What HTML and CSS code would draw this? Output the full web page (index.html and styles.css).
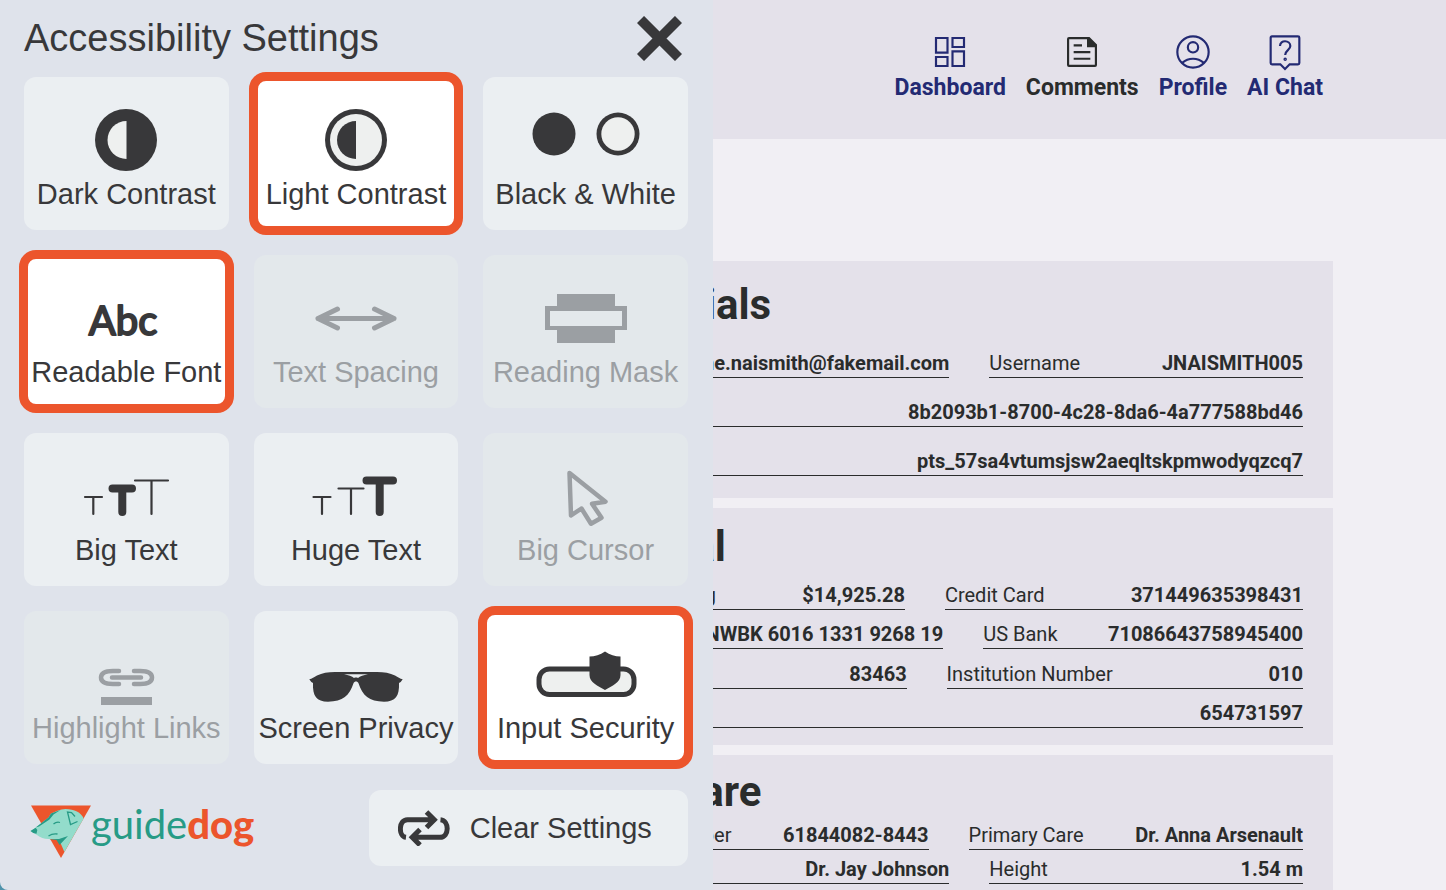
FILE: index.html
```
<!DOCTYPE html>
<html lang="en">
<head>
    <meta charset="UTF-8">
    <meta name="viewport" content="width=device-width, initial-scale=1.0">
    <title>Profile</title>
    <link rel="stylesheet" href="styles.css">
</head>
<body>
    <div class="page">
        <header class="site-header">
            <nav class="nav">
                <a class="nav-link" href="#dashboard">
                    <svg class="line" viewBox="0 0 24 24"><path d="M3.600 3.600h6.900v8.800H3.600zM13.500 3.600h6.900v5.400h-6.900zM3.600 15h6.900v5.400H3.600zM13.500 11.600h6.900v8.800h-6.900z"/></svg>
                    Dashboard
                </a>
                <a class="nav-link current" href="#comments">
                    <svg viewBox="0 0 24 24"><path fill-rule="evenodd" d="M4.200 3H16.500l4.500 4.500v12.300a1.200 1.200 0 0 1-1.200 1.200H4.200A1.200 1.200 0 0 1 3 19.800V4.200A1.200 1.200 0 0 1 4.200 3zM4.300 4.300v15.400h15.400V9.200H15V4.300z"/><path d="M7 7.400h5v1.300H7zM7 11.400h10v1.300H7zM7 15.400h10v1.300H7z"/></svg>
                    Comments
                </a>
                <a class="nav-link" href="#profile">
                    <svg class="line" viewBox="0 0 24 24"><circle cx="12" cy="12" r="9.400"/><circle cx="12" cy="9.200" r="3.100"/><path d="M5.500 18.500c3.800-3.300 9.200-3.300 13 0"/></svg>
                    Profile
                </a>
                <a class="nav-link" href="#chat">
                    <svg class="line" viewBox="0 0 24 24"><path d="M4.200 2.600h15.600q.8 0 .8.800v15.200q0 .8-.8.800h-5L12 22.200l-2.800-2.800h-5q-.8 0-.8-.8V3.400q0-.8.800-.8z"/><path d="M9 8.400c0-4 6.200-3.600 6.200 0 0 2.400-3.100 2.600-3.100 5.400"/><circle cx="12.100" cy="16.400" r=".4"/></svg>
                    AI Chat
                </a>
            </nav>
        </header>

        <main class="content">
            <section class="card">
                <h2>Credentials</h2>
                <div class="row">
                    <div class="field"><span>Email</span><b>jane.naismith@fakemail.com</b></div>
                    <div class="field"><span>Username</span><b>JNAISMITH005</b></div>
                </div>
                <div class="row">
                    <div class="field"><span>User ID</span><b>8b2093b1-8700-4c28-8da6-4a777588bd46</b></div>
                </div>
                <div class="row">
                    <div class="field"><span>Token</span><b>pts_57sa4vtumsjsw2aeqltskpmwodyqzcq7</b></div>
                </div>
            </section>

            <section class="card">
                <h2>Financial</h2>
                <div class="row">
                    <div class="field"><span>Balance Chequing</span><b>$14,925.28</b></div>
                    <div class="field"><span>Credit Card</span><b>371449635398431</b></div>
                </div>
                <div class="row">
                    <div class="field"><span>IBAN</span><b>GB31 NWBK 6016 1331 9268 19</b></div>
                    <div class="field"><span>US Bank</span><b>71086643758945400</b></div>
                </div>
                <div class="row">
                    <div class="field"><span>Transit Number</span><b>83463</b></div>
                    <div class="field"><span>Institution Number</span><b>010</b></div>
                </div>
                <div class="row">
                    <div class="field"><span>Account</span><b>654731597</b></div>
                </div>
            </section>

            <section class="card card-dense">
                <h2>Healthcare</h2>
                <div class="row">
                    <div class="field"><span>Patient File Number</span><b>61844082-8443</b></div>
                    <div class="field"><span>Primary Care</span><b>Dr. Anna Arsenault</b></div>
                </div>
                <div class="row">
                    <div class="field"><span>Dental</span><b>Dr. Jay Johnson</b></div>
                    <div class="field"><span>Height</span><b>1.54 m</b></div>
                </div>
            </section>
        </main>
    </div>

    <aside class="panel" aria-label="Accessibility Settings">
        <div class="panel-head">
            <h1>Accessibility Settings</h1>
            <button class="close" type="button" aria-label="Close">
                <svg viewBox="0 0 45 45"><path d="M3.500 3.500l38 38M41.500 3.500l-38 38"/></svg>
            </button>
        </div>

        <div class="tiles">
            <button class="tile" type="button">
                <svg viewBox="0 0 204 100"><circle class="ink" cx="102" cy="63" r="31"/><path class="pale" d="M102.500 44a19 19 0 0 0 0 38z"/></svg>
                Dark Contrast
            </button>
            <button class="tile active" type="button" aria-pressed="true">
                <svg viewBox="0 0 204 100"><circle class="ink" cx="102" cy="63" r="31"/><circle class="pale" cx="102" cy="63" r="26"/><path class="ink" d="M102 44a19 19 0 0 0 0 38z"/></svg>
                Light Contrast
            </button>
            <button class="tile" type="button">
                <svg viewBox="0 0 204 100"><circle class="ink" cx="70" cy="57" r="21.500"/><circle class="ink" cx="134" cy="57" r="21.500"/><circle class="pale" cx="134" cy="57" r="16.700"/></svg>
                Black &amp; White
            </button>

            <button class="tile active" type="button" aria-pressed="true">
                <svg viewBox="0 0 204 100"><text class="abc" x="99" y="80" text-anchor="middle">Abc</text></svg>
                Readable Font
            </button>
            <button class="tile" type="button" disabled>
                <svg viewBox="0 0 204 100"><path class="stroke" stroke-width="5" d="M64 63.500h76M83.500 54L64 63.500 83.500 73M120.500 54l19.500 9.500-19.500 9.500"/></svg>
                Text Spacing
            </button>
            <button class="tile" type="button" disabled>
                <svg viewBox="0 0 204 100"><path class="ink" fill-rule="evenodd" d="M73 39h58v12h12v24h-12v13H73V75H61V51h12zM66 56v15h72V56z"/></svg>
                Reading Mask
            </button>

            <button class="tile" type="button">
                <svg viewBox="0 0 204 100">
                    <path class="stroke" stroke-width="2.200" d="M61 64h17M69.300 64v17M111 47.500h33M127.500 47.500V81"/>
                    <path class="stroke" stroke-width="8" d="M88.500 55.500h19.500M98.300 55.500V79"/>
                </svg>
                Big Text
            </button>
            <button class="tile" type="button">
                <svg viewBox="0 0 204 100">
                    <path class="stroke" stroke-width="2.200" d="M59.500 64h17M68 64v17M84.500 55.500h25M97 55.500V81"/>
                    <path class="stroke" stroke-width="8" d="M112.500 47.500h26.500M125.700 47.500V79"/>
                </svg>
                Huge Text
            </button>
            <button class="tile" type="button" disabled>
                <svg viewBox="0 0 204 100"><path class="stroke" stroke-width="4.500" d="M85.500 40l36 28.700-13.500 2 9.500 14-10.500 6-9.500-15.200-10.500 7z"/></svg>
                Big Cursor
            </button>

            <button class="tile" type="button" disabled>
                <svg viewBox="0 0 204 100">
                    <path class="stroke" stroke-width="4.500" d="M95 60h-6c-7 0-12 2-12 6.500S82 73 89 73h6M110 60h6c7 0 12 2 12 6.500S123 73 116 73h-6M88 66.500h29"/>
                    <rect class="ink" x="77" y="86" width="51" height="8"/>
                </svg>
                Highlight Links
            </button>
            <button class="tile" type="button">
                <svg viewBox="0 0 204 100"><path class="ink" fill-rule="evenodd" d="M55.300 68.300C58 67.500 60 66.500 63 64.500 68 62 74 61 81 61h42c7 0 13 1 18 3.500 3 2 5 3 7.700 3.800l-2 2.700-1.700 1c.5 13-3.500 18.700-15 18.700-15 0-21.500-6-25.500-18.400-.8-2.400-4.200-2.400-5 0C95.500 84.700 89 90.700 74 90.700 62.500 90.700 58.500 85 59 72l-1.700-1zM90 63.200c4.500.8 8 2 10 3.800 1.300-.6 2.700-.6 4 0 2-1.800 5.500-3 10-3.800z"/></svg>
                Screen Privacy
            </button>
            <button class="tile active" type="button" aria-pressed="true">
                <svg viewBox="0 0 204 100">
                    <rect class="pale outlined" x="55" y="58" width="95" height="25.500" rx="10.500"/>
                    <path class="ink" d="M121 40.500c-5 3.500-10 5-15.500 5V64c0 8 8.500 10.500 15.500 15 7-4.500 15.500-7 15.500-15V45.500c-5.500 0-10.500-1.500-15.500-5z"/>
                </svg>
                Input Security
            </button>
        </div>

        <div class="panel-foot">
            <a class="logo" href="#guidedog" aria-label="guidedog">
                <svg viewBox="0 0 61 55">
                    <path fill="#ec552c" d="M1 1.500h60L31 54z"/>
                    <path fill="#93dccb" d="M.5 27l5.200-3.500 12.800-10L21 9.500C26 7.500 30 5 35.500 5c9 0 15.500 3.500 18.200 9.500L48.700 23 34.400 48 29 35.500l-9-.5c-5 .5-9-1-13-4z"/>
                    <path fill="#279b86" d="M.5 27l5.200-3.300 1.600 2.300-.8 3.800Q3 29.500.500 27zM5.700 23.500l12.800-10L21 9.500 30.500 6l-7 4.500-4 5-10.500 7zM19 35.300l10-.3 9-3-8.500 9-3-5z"/>
                    <path fill="none" stroke="#279b86" stroke-width="1.300" d="M45 12.500L41.500 8.500 37.500 8l3 12.500 7-3M23.500 20q3-2.500 6.500-1.500M18.500 32q4-2.800 9-2"/>
                </svg>
                <span>guide<b>dog</b></span>
            </a>
            <button class="clear" type="button">
                <svg viewBox="0 0 52 36"><path d="M8 27.300C.300 26.500.300 9.700 9.500 9.700H35M28.500 1.900l7.800 7.800-7.800 7.800M42.500 9.700c9 .8 9 17.600-.5 17.600H16M22 19.500l-7.800 7.800 7.800 7.800"/></svg>
                Clear Settings
            </button>
        </div>
    </aside>
</body>
</html>
```

FILE: styles.css
```
:root {
    --ink: #38383a;
    --orange: #ec552c;
    --panel: #dfe3eb;
    --tile: #ebeff2;
    --lilac: #e4e1ea;
    --navy: #232a73;
    --text: #2a2c2c;
}

* {
    box-sizing: border-box;
}

body {
    margin: 0;
    background: #f1eff4;
    color: var(--text);
    font-family: Roboto, sans-serif;
}

/* page behind the panel */
.page {
    height: 100vh;
    overflow: hidden;
    border-left: 8px solid #4f93ab;
}

.site-header {
    height: 139px;
    padding: 32px 123px 0;
    background: var(--lilac);
}

.nav {
    display: flex;
    justify-content: flex-end;
    gap: 20px;
}

.nav-link {
    display: flex;
    flex-direction: column;
    align-items: center;
    gap: 1px;
    color: var(--navy);
    font-size: 23px;
    line-height: 30px;
    font-weight: 700;
    text-decoration: none;
}

.nav-link.current {
    color: var(--text);
}

.nav-link svg {
    width: 40px;
    height: 40px;
    fill: currentColor;
}

.nav-link .line {
    fill: none;
    stroke: currentColor;
    stroke-width: 1.3;
}

.content {
    display: flex;
    flex-direction: column;
    gap: 10px;
    padding: 122px 113px 0 36%;
}

.card {
    display: flex;
    flex-direction: column;
    flex-shrink: 0;
    justify-content: space-around;
    min-height: 237px;
    padding: 10px 30px 12px;
    background: var(--lilac);
}

.card-dense {
    justify-content: flex-start;
    gap: 5px;
    padding-top: 13px;
}

.card h2 {
    margin: 0;
    font-size: 42px;
    line-height: 48px;
}

.row {
    display: flex;
    gap: 40px;
}

.field {
    display: flex;
    flex: 1 1 auto;
    justify-content: space-between;
    border-bottom: 1px solid var(--text);
    font-size: 20px;
    line-height: 28px;
    white-space: nowrap;
}

/* settings panel */
.panel {
    position: fixed;
    top: 0;
    bottom: 0;
    left: 0;
    width: 49.3%;
    padding: 16px 25px 24px 24px;
    overflow: hidden;
    border-radius: 0 0 0 8px;
    background: var(--panel);
    color: var(--ink);
    font-family: "Liberation Sans", Arial, sans-serif;
}

.panel button {
    border: none;
    padding: 0;
    font-family: inherit;
    font-size: 29px;
    line-height: 34px;
    color: var(--ink);
    white-space: nowrap;
    cursor: pointer;
}

.panel-head {
    display: flex;
    align-items: center;
    justify-content: space-between;
    margin-bottom: 16px;
    padding-right: 6px;
}

.panel-head h1 {
    margin: 0;
    font-size: 38px;
    line-height: 45px;
    font-weight: 400;
}

.panel .close {
    width: 45px;
    height: 45px;
    background: none;
}

.close svg {
    display: block;
    stroke: var(--ink);
    stroke-width: 10;
}

.tiles {
    display: grid;
    grid-template-columns: repeat(3, 1fr);
    gap: 25px;
}

.panel .tile {
    display: flex;
    flex-direction: column;
    align-items: center;
    height: 153px;
    border-radius: 12px;
    background: var(--tile);
}

.panel .tile.active {
    background: #fff;
    outline: 9px solid var(--orange);
    outline-offset: -4px;
}

.panel .tile:disabled {
    background: #e3e8eb;
    color: #9b9fa3;
    cursor: default;
}

.tile svg {
    width: 204px;
    height: 100px;
    flex-shrink: 0;
}

.ink {
    fill: currentColor;
}

.pale {
    fill: #eef0ef;
}

.outlined {
    stroke: currentColor;
    stroke-width: 5;
}

.stroke {
    fill: none;
    stroke: currentColor;
    stroke-linecap: round;
    stroke-linejoin: round;
}

.abc {
    fill: currentColor;
    stroke: currentColor;
    stroke-width: 2;
    stroke-linejoin: round;
    font-family: Lato, sans-serif;
    font-size: 40px;
    font-weight: 400;
}

.panel-foot {
    display: flex;
    align-items: center;
    justify-content: space-between;
    margin-top: 26px;
}

.logo {
    display: flex;
    align-items: flex-start;
    padding-left: 6px;
    color: #279b86;
    font-family: Lato, sans-serif;
    font-size: 40px;
    line-height: 52px;
    text-decoration: none;
}

.logo svg {
    width: 61px;
    height: 55px;
    margin-top: 6px;
}

.logo b {
    color: var(--orange);
    font-weight: 900;
}

.panel .clear {
    display: flex;
    align-items: center;
    gap: 20px;
    height: 76px;
    padding: 0 36px 0 29px;
    border-radius: 12px;
    background: var(--tile);
}

.clear svg {
    width: 52px;
    height: 36px;
    fill: none;
    stroke: var(--ink);
    stroke-width: 5;
}
```
